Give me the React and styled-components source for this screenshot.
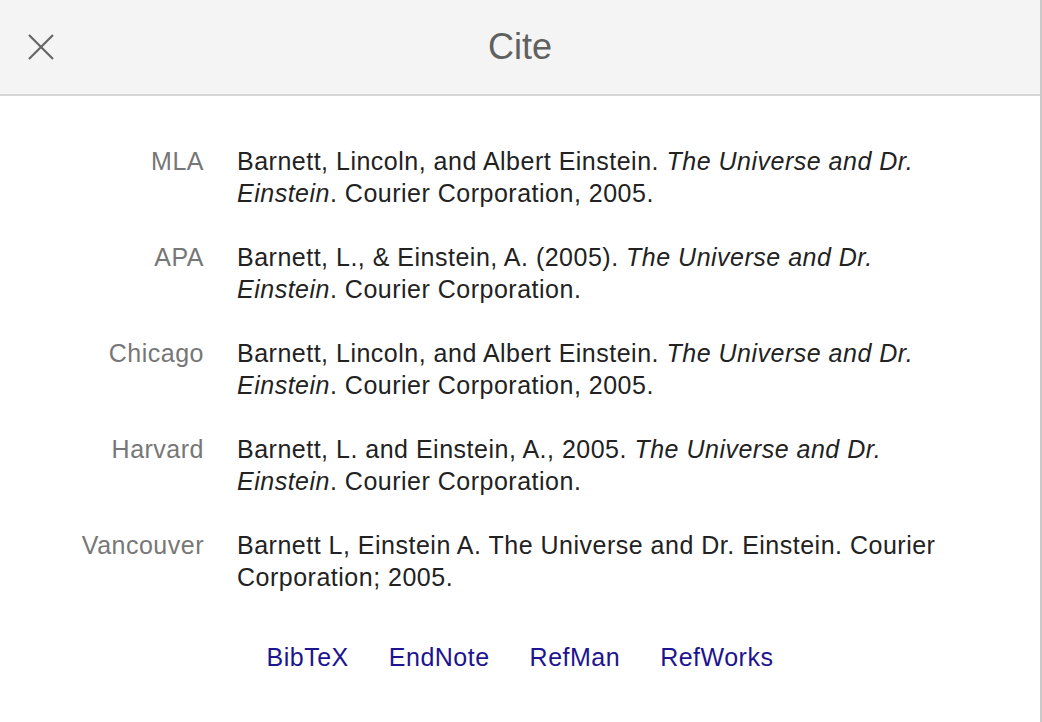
import React from 'react'
import styled, { createGlobalStyle } from 'styled-components'

const GlobalStyle = createGlobalStyle`
    html, body {
        margin: 0;
        padding: 0;
        background: #fff;
    }
    body {
        font-family: "Liberation Sans", Arial, sans-serif;
    }
`

const Page = styled.div`
    box-sizing: border-box;
    width: 1042px;
    min-height: 722px;
    border-right: 2px solid #c9c9c9;
    background: #fff;
`

const Header = styled.header`
    display: grid;
    grid-template-columns: 1fr auto 1fr;
    align-items: center;
    height: 94px;
    background: #f4f4f4;
    border-bottom: 2px solid #d6d6d6;
`

const CloseButton = styled.button`
    justify-self: start;
    display: flex;
    align-items: center;
    justify-content: center;
    margin-left: 28px;
    padding: 0;
    border: 0;
    background: none;
    cursor: pointer;
`

const Title = styled.h1`
    margin: 0;
    font-size: 36px;
    font-weight: 400;
    color: #606060;
`

const Content = styled.main`
    padding: 49px 0 40px;
`

const Entries = styled.dl`
    display: grid;
    grid-template-columns: 204px 1fr;
    column-gap: 33px;
    row-gap: 32px;
    margin: 0;
    padding-right: 73px;
    font-size: 25px;
    letter-spacing: 0.5px;
    line-height: 32px;
`

const Style = styled.dt`
    text-align: right;
    color: #777;
`

const Citation = styled.dd`
    margin: 0;
    color: #222;

    em {
        font-style: italic;
    }
`

const Exports = styled.nav`
    display: flex;
    justify-content: center;
    gap: 40px;
    margin-top: 48px;
    font-size: 25px;
    letter-spacing: 0.5px;
    line-height: 32px;
`

const ExportLink = styled.a`
    color: #1d1490;
    text-decoration: none;
    cursor: pointer;
`

const CloseIcon = () => (
    <svg width="26" height="26" viewBox="0 0 26 26" fill="none">
        <path d="M1 1 L25 25 M25 1 L1 25" stroke="#666" strokeWidth="2.2" />
    </svg>
)

const citations = [
    { style: 'MLA', text: <>Barnett, Lincoln, and Albert Einstein. <em>The Universe and Dr. Einstein</em>. Courier Corporation, 2005.</> },
    { style: 'APA', text: <>Barnett, L., &amp; Einstein, A. (2005). <em>The Universe and Dr. Einstein</em>. Courier Corporation.</> },
    { style: 'Chicago', text: <>Barnett, Lincoln, and Albert Einstein. <em>The Universe and Dr. Einstein</em>. Courier Corporation, 2005.</> },
    { style: 'Harvard', text: <>Barnett, L. and Einstein, A., 2005. <em>The Universe and Dr. Einstein</em>. Courier Corporation.</> },
    { style: 'Vancouver', text: <>Barnett L, Einstein A. The Universe and Dr. Einstein. Courier Corporation; 2005.</> },
]

const formats = ['BibTeX', 'EndNote', 'RefMan', 'RefWorks']

export default function App() {
    return (
        <Page>
            <GlobalStyle />
            <Header>
                <CloseButton aria-label="Close"><CloseIcon /></CloseButton>
                <Title>Cite</Title>
            </Header>
            <Content>
                <Entries>
                    { citations.map(c => (
                        <React.Fragment key={ c.style }>
                            <Style>{ c.style }</Style>
                            <Citation>{ c.text }</Citation>
                        </React.Fragment>
                    )) }
                </Entries>
                <Exports>
                    { formats.map(f => <ExportLink key={ f }>{ f }</ExportLink>) }
                </Exports>
            </Content>
        </Page>
    )
}
